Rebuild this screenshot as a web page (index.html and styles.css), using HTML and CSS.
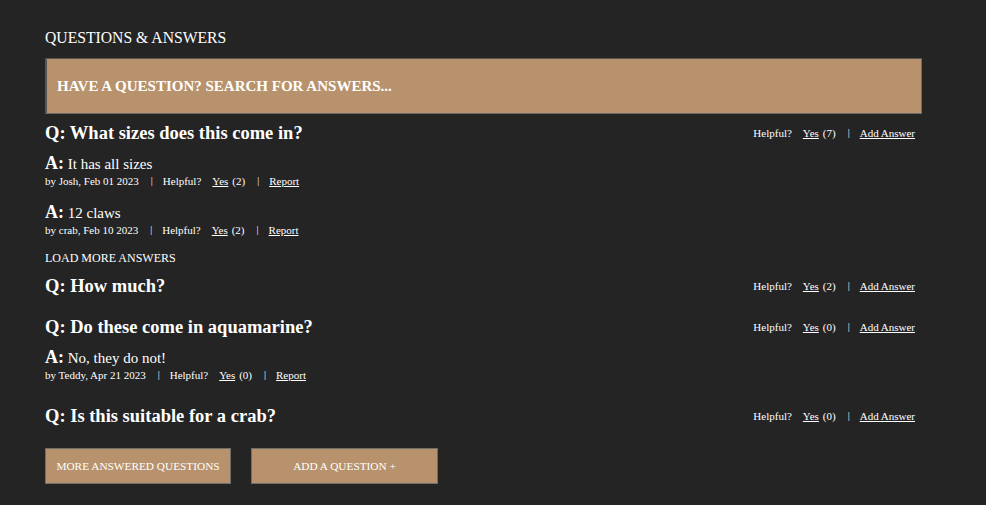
FILE: index.html
```html
<!DOCTYPE html>
<html>
<head>
<meta charset="utf-8">
<link rel="stylesheet" href="styles.css">
</head>
<body>
<section class="qa">
  <h2 class="qa-title">QUESTIONS &amp; ANSWERS</h2>
  <input class="search" type="text" placeholder="HAVE A QUESTION? SEARCH FOR ANSWERS...">
  <div class="list">
    <div class="question">
      <div class="q-row">
        <h3 class="q-text">Q: What sizes does this come in?</h3>
        <div class="q-actions">
          <span>Helpful?</span><a class="link">Yes</a><span class="count">(7)</span><span class="sep">|</span><a class="link">Add Answer</a>
        </div>
      </div>
      <div class="answer">
        <p class="a-text"><b class="a-label">A:</b> It has all sizes</p>
        <div class="meta">
          <span>by Josh, Feb 01 2023</span><span class="sep">|</span><span>Helpful?</span><a class="link">Yes</a><span class="count">(2)</span><span class="sep">|</span><a class="link">Report</a>
        </div>
      </div>
      <div class="answer">
        <p class="a-text"><b class="a-label">A:</b> 12 claws</p>
        <div class="meta">
          <span>by crab, Feb 10 2023</span><span class="sep">|</span><span>Helpful?</span><a class="link">Yes</a><span class="count">(2)</span><span class="sep">|</span><a class="link">Report</a>
        </div>
      </div>
      <div class="load-more">LOAD MORE ANSWERS</div>
    </div>
    <div class="question">
      <div class="q-row">
        <h3 class="q-text">Q: How much?</h3>
        <div class="q-actions">
          <span>Helpful?</span><a class="link">Yes</a><span class="count">(2)</span><span class="sep">|</span><a class="link">Add Answer</a>
        </div>
      </div>
    </div>
    <div class="question">
      <div class="q-row">
        <h3 class="q-text">Q: Do these come in aquamarine?</h3>
        <div class="q-actions">
          <span>Helpful?</span><a class="link">Yes</a><span class="count">(0)</span><span class="sep">|</span><a class="link">Add Answer</a>
        </div>
      </div>
      <div class="answer">
        <p class="a-text"><b class="a-label">A:</b> No, they do not!</p>
        <div class="meta">
          <span>by Teddy, Apr 21 2023</span><span class="sep">|</span><span>Helpful?</span><a class="link">Yes</a><span class="count">(0)</span><span class="sep">|</span><a class="link">Report</a>
        </div>
      </div>
    </div>
    <div class="question">
      <div class="q-row">
        <h3 class="q-text">Q: Is this suitable for a crab?</h3>
        <div class="q-actions">
          <span>Helpful?</span><a class="link">Yes</a><span class="count">(0)</span><span class="sep">|</span><a class="link">Add Answer</a>
        </div>
      </div>
    </div>
  </div>
  <div class="buttons">
    <button class="btn btn-more">MORE ANSWERED QUESTIONS</button>
    <button class="btn btn-add">ADD A QUESTION +</button>
  </div>
</section>
</body>
</html>
```
FILE: styles.css
```css
html, body {
  margin: 0;
  padding: 0;
  background: #242424;
  color: #fff;
  font-family: "Liberation Serif", "Times New Roman", serif;
}
.qa {
  padding: 29px 64px 20px 45px;
}
.qa-title {
  margin: 0;
  font-size: 15.7px;
  font-weight: normal;
  line-height: 18px;
}
.search {
  display: block;
  box-sizing: border-box;
  width: 877px;
  height: 56px;
  margin-top: 11px;
  padding: 0 10px;
  background: #b8926c;
  border: 1px solid #6b6b6b;
  border-top-color: #555;
  border-left-color: #555;
  border-left-width: 2px;
  font-family: inherit;
  font-size: 15px;
  font-weight: bold;
  color: #fff;
}
.search::placeholder {
  color: #fff;
  opacity: 1;
}
.list {
  margin-top: 7px;
}
.question {
  margin-bottom: 17px;
}
.q-row {
  display: flex;
  justify-content: space-between;
  align-items: center;
  padding-right: 7px;
}
.q-text {
  margin: 0;
  font-size: 18.5px;
  line-height: 24px;
  font-weight: bold;
}
.q-actions, .meta {
  display: flex;
  align-items: center;
  font-size: 11px;
  line-height: 14px;
}
.link {
  color: #fff;
  text-decoration: underline;
  margin-left: 11px;
}
.count {
  margin-left: 4px;
}
.sep {
  margin: 0 10px 0 12px;
  font-size: 10px;
}
.sep + .link {
  margin-left: 0;
}
.answer {
  margin-top: 9px;
}
.answer + .answer {
  margin-top: 15px;
}
.answer:last-child {
  padding-bottom: 5px;
}
.a-text {
  margin: 0;
  font-size: 15px;
  line-height: 18px;
}
.a-label {
  font-size: 18px;
}
.meta {
  margin-top: 1px;
}
.load-more {
  margin-top: 14px;
  margin-bottom: -8px;
  font-size: 12px;
  line-height: 14px;
}
.buttons {
  display: flex;
  gap: 20px;
  margin-top: 20px;
}
.btn {
  height: 36px;
  background: #b8926c;
  border: 1px solid #6e6e6e;
  color: #fff;
  font-family: inherit;
  font-size: 11.3px;
  padding: 0;
}
.btn-more {
  width: 186px;
}
.btn-add {
  width: 187px;
}
```
